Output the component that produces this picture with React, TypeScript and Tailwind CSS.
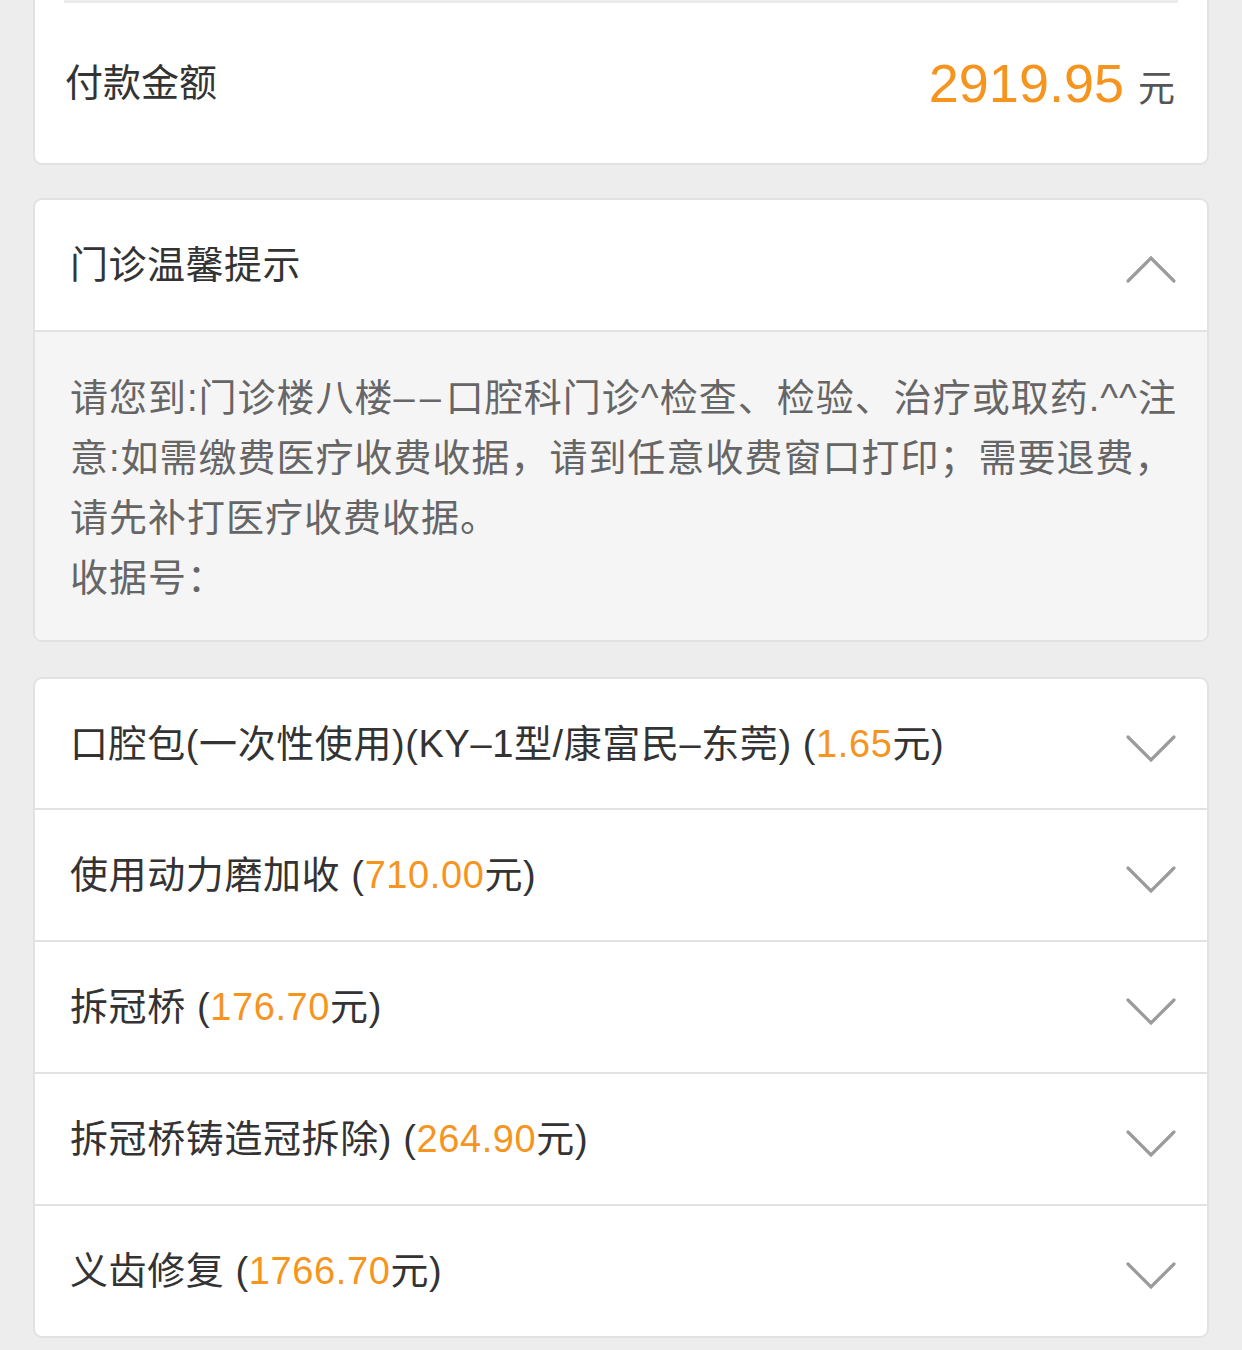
import React from "react";

const FONT = '"Liberation Sans", "Noto Sans CJK SC", sans-serif';

function Chevron({ up }: { up?: boolean }) {
  return (
    <svg width="52" height="30" viewBox="0 0 52 30" className="shrink-0">
      <polyline
        points={up ? "3,26 26,3 49,26" : "3,4 26,27 49,4"}
        fill="none"
        stroke="#9b9b9b"
        strokeWidth="3.2"
        strokeLinecap="round"
        strokeLinejoin="miter"
      />
    </svg>
  );
}

const items: { name: string; amount: string }[] = [
  { name: "口腔包(一次性使用)(KY–1型/康富民–东莞) ", amount: "1.65" },
  { name: "使用动力磨加收 ", amount: "710.00" },
  { name: "拆冠桥 ", amount: "176.70" },
  { name: "拆冠桥铸造冠拆除) ", amount: "264.90" },
  { name: "义齿修复 ", amount: "1766.70" },
];

export default function App() {
  return (
    <div
      className="min-h-[1350px] w-[1242px] bg-[#ededed] pb-[20px]"
      style={{ fontFamily: FONT }}
    >
      {/* Card 1 */}
      <div className="mx-[33px] rounded-b-[9px] border-x-2 border-b-2 border-[#e2e2e2] bg-white">
        <div className="mx-[29px] h-[3px] bg-[#ebebeb]" />
        <div className="flex h-[160px] items-center justify-between pl-[30px] pr-[32px]">
          <span className="text-[38px] leading-none text-[#333]">付款金额</span>
          <span className="flex items-baseline">
            <span className="text-[54px] leading-none text-[#f5951f]">2919.95</span>
            <span className="ml-[14px] text-[37px] leading-none text-[#555]">元</span>
          </span>
        </div>
      </div>

      {/* Card 2 */}
      <div className="mx-[33px] mt-[33px] overflow-hidden rounded-[9px] border-2 border-[#e2e2e2] bg-white">
        <div className="flex h-[130px] items-center justify-between pl-[35px] pr-[30px]">
          <span className="text-[38px] leading-none tracking-[0.5px] text-[#333]">门诊温馨提示</span>
          <span className="mt-[10px]">
            <Chevron up />
          </span>
        </div>
        <div className="border-t-2 border-[#e2e2e2] bg-[#f5f5f5] pl-[35px] pr-[28px] pt-[36px] pb-[32px]">
          <p className="text-[38px] leading-[60px] tracking-[1px] text-[#666]">
            请您到:门诊楼八楼<span className="tracking-[5px]">––</span>口腔科门诊^检查、检验、治疗或取药.^^注意:如需缴费医疗收费收据，请到任意收费窗口打印；需要退费，请先补打医疗收费收据。
          </p>
          <p className="text-[38px] leading-[60px] tracking-[1px] text-[#666]">收据号：</p>
        </div>
      </div>

      {/* Card 3 */}
      <div className="mx-[33px] mt-[35px] overflow-hidden rounded-[9px] border-2 border-[#e2e2e2] bg-white">
        {items.map((it, i) => (
          <div
            key={i}
            className={
              "flex items-center justify-between pl-[35px] pr-[30px] " +
              (i > 0 ? "h-[132px] border-t-2 border-[#e2e2e2]" : "h-[129px]")
            }
          >
            <span className="text-[38px] leading-none tracking-[0.6px] text-[#333] whitespace-pre">
              {it.name}(<span className="text-[#f5951f]">{it.amount}</span>元)
            </span>
            <span className="mt-[8px]">
              <Chevron />
            </span>
          </div>
        ))}
      </div>
    </div>
  );
}
